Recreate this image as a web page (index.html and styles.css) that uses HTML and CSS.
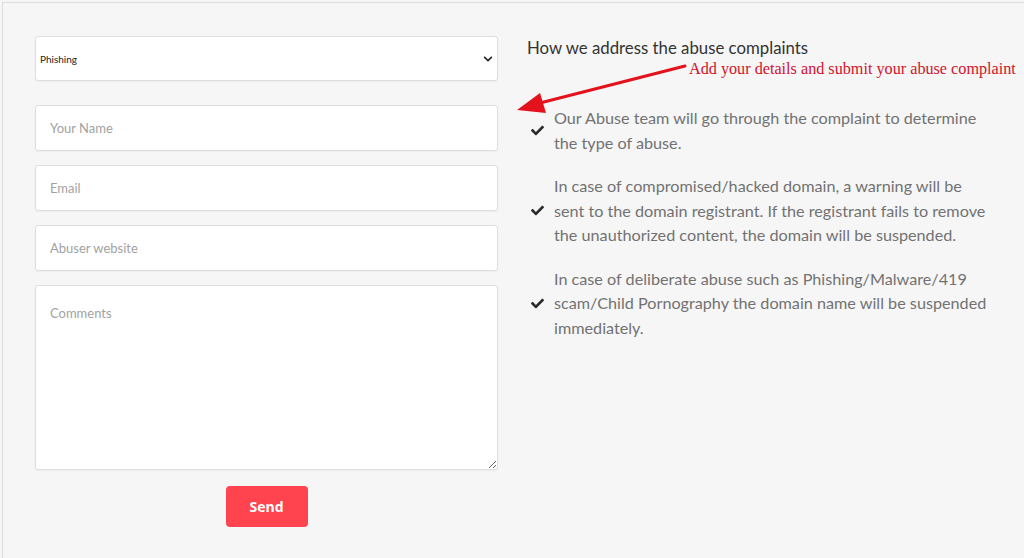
FILE: index.html
```html
<!DOCTYPE html>
<html>
<head>
    <title>Abuse Complaint</title>
    <link rel="stylesheet" href="styles.css">
</head>
<body>
    <div class="page">
        <form class="abuse-form" onsubmit="event.preventDefault();">
            <div class="select-wrap">
                <select class="field select" name="abuse-type">
                    <option>Phishing</option>
                    <option>Malware</option>
                    <option>Spam</option>
                    <option>419 scam</option>
                </select>
                <svg class="chevron" viewBox="0 0 448 512" width="10" height="10"><path d="M207 381.5L12.7 187.1c-9.4-9.4-9.4-24.6 0-33.9l22.7-22.7c9.4-9.4 24.5-9.4 33.9 0L224 284.5l154.7-154c9.4-9.3 24.5-9.3 33.9 0l22.7 22.7c9.4 9.4 9.4 24.6 0 33.9L241 381.5c-9.4 9.4-24.6 9.4-34 0z" fill="#222"/></svg>
            </div>
            <div class="inputs">
                <input class="field" type="text" placeholder="Your Name">
                <input class="field" type="text" placeholder="Email">
                <input class="field" type="text" placeholder="Abuser website">
                <textarea class="field comments" placeholder="Comments"></textarea>
            </div>
            <button type="submit" class="send">Send</button>
        </form>

        <div class="info">
            <h3 class="info-title">How we address the abuse complaints</h3>
            <ul class="steps">
                <li>
                    <svg class="check" viewBox="0 0 512 512"><path d="M173.898 439.404l-166.4-166.4c-9.997-9.997-9.997-26.206 0-36.204l36.203-36.204c9.997-9.998 26.207-9.998 36.204 0L192 312.69 432.095 72.596c9.997-9.997 26.207-9.997 36.204 0l36.203 36.204c9.997 9.997 9.997 26.206 0 36.204l-294.4 294.401c-9.998 9.997-26.207 9.997-36.204-.001z"/></svg>
                    <p>Our Abuse team will go through the complaint to determine the type of abuse.</p>
                </li>
                <li>
                    <svg class="check" viewBox="0 0 512 512"><path d="M173.898 439.404l-166.4-166.4c-9.997-9.997-9.997-26.206 0-36.204l36.203-36.204c9.997-9.998 26.207-9.998 36.204 0L192 312.69 432.095 72.596c9.997-9.997 26.207-9.997 36.204 0l36.203 36.204c9.997 9.997 9.997 26.206 0 36.204l-294.4 294.401c-9.998 9.997-26.207 9.997-36.204-.001z"/></svg>
                    <p>In case of compromised/hacked domain, a warning will be sent to the domain registrant. If the registrant fails to remove the unauthorized content, the domain will be suspended.</p>
                </li>
                <li>
                    <svg class="check" viewBox="0 0 512 512"><path d="M173.898 439.404l-166.4-166.4c-9.997-9.997-9.997-26.206 0-36.204l36.203-36.204c9.997-9.998 26.207-9.998 36.204 0L192 312.69 432.095 72.596c9.997-9.997 26.207-9.997 36.204 0l36.203 36.204c9.997 9.997 9.997 26.206 0 36.204l-294.4 294.401c-9.998 9.997-26.207 9.997-36.204-.001z"/></svg>
                    <p>In case of deliberate abuse such as Phishing/Malware/419 scam/Child Pornography the domain name will be suspended immediately.</p>
                </li>
            </ul>
        </div>

        <!-- annotation drawn over the screenshot -->
        <div class="note">Add your details and submit your abuse complaint</div>
        <svg class="note-arrow" viewBox="0 0 180 70" width="180" height="70">
            <line x1="175" y1="11" x2="26" y2="49" stroke="#e3121c" stroke-width="3" stroke-linecap="round"/>
            <polygon points="7,55 30,38 36,58" fill="#e3121c"/>
        </svg>
    </div>
</body>
</html>
```

FILE: styles.css
```css
html, body {
    margin: 0;
    height: 100%;
}

body {
    background: #f6f6f6;
    padding: 2px 0 0 2px;
    box-sizing: border-box;
    font-family: Lato, "Open Sans", sans-serif;
}

.page {
    position: relative;
    height: 100%;
    box-sizing: border-box;
    border-top: 1px solid #dcdcdc;
    border-left: 1px solid #dcdcdc;
    display: flex;
    gap: 29px;
    padding: 33px 0 0 32px;
}

.abuse-form {
    width: 463px;
    display: flex;
    flex-direction: column;
}

.field {
    box-sizing: border-box;
    width: 100%;
    height: 46px;
    margin: 0;
    background: #fff;
    border: 1px solid #dedede;
    border-radius: 3px;
    box-shadow: 0 1px 2px rgba(0,0,0,0.04);
    padding: 0 14px;
    font-family: Lato, sans-serif;
    font-size: 13px;
    color: #333;
    outline: none;
}

.field::placeholder {
    color: #a2a2a2;
}

.select-wrap {
    position: relative;
}

    .select-wrap .select {
        height: 45px;
        appearance: none;
        -webkit-appearance: none;
        padding: 0 4px;
        font-size: 10px;
        color: #222;
    }

    .select-wrap .chevron {
        position: absolute;
        right: 5px;
        top: 18px;
        pointer-events: none;
    }

.inputs {
    margin-top: 24px;
    display: flex;
    flex-direction: column;
    gap: 14px;
}

.comments {
    height: 185px;
    padding: 19px 14px;
    resize: vertical;
}

.send {
    align-self: center;
    margin-top: 16px;
    width: 82px;
    height: 41px;
    border: none;
    border-radius: 4px;
    background: #ff444f;
    color: #fff;
    font-family: "Open Sans", sans-serif;
    font-weight: bold;
    font-size: 14px;
    cursor: pointer;
}

.info {
    width: 470px;
}

.info-title {
    margin: 2px 0 0;
    font-size: 16.8px;
    font-weight: normal;
    line-height: 20px;
    color: #333;
}

.steps {
    list-style: none;
    margin: 48px 0 0;
    padding: 0;
    display: flex;
    flex-direction: column;
    gap: 19px;
}

    .steps li {
        display: flex;
        align-items: center;
        gap: 9px;
    }

    .steps .check {
        flex: none;
        width: 15px;
        height: 13px;
        margin-left: 3px;
        fill: #2b2b2b;
    }

    .steps p {
        width: 435px;
        margin: 0;
        font-size: 16.2px;
        line-height: 24.5px;
        color: #727272;
    }

.note {
    position: absolute;
    left: 686px;
    top: 57px;
    font-family: "Liberation Serif", serif;
    font-size: 16.2px;
    color: #d3122b;
    white-space: nowrap;
}

.note-arrow {
    position: absolute;
    left: 507px;
    top: 52px;
}
```
